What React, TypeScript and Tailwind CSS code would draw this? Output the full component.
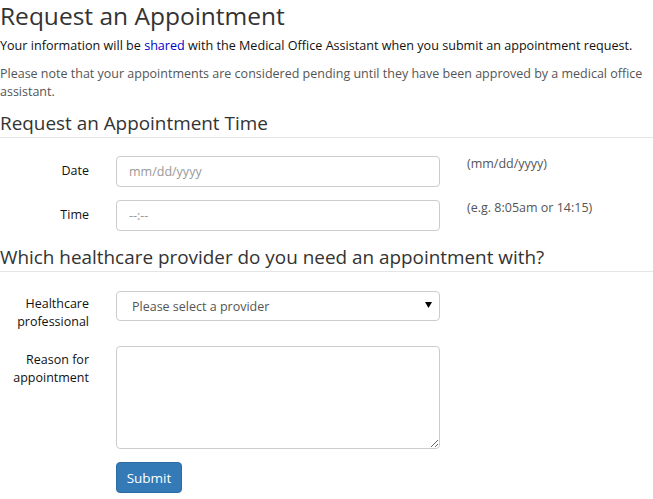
import React from "react";

export default function App() {
  return (
    <div className="bg-white text-[#333] text-[12.5px] leading-[18px]" style={{ fontFamily: '"Open Sans", "Liberation Sans", sans-serif' }}>
      <h1 className="text-[24.5px] leading-[30px] text-[#333] pt-[1px]">Request an Appointment</h1>
      <p className="mt-[6px] text-[#111] text-[12.6px]">
        Your information will be <span className="text-[#0000cc]">shared</span> with the Medical Office Assistant when you submit an appointment request.
      </p>
      <p className="mt-[10px] text-[#555] pr-[4px]">
        Please note that your appointments are considered pending until they have been approved by a medical office assistant.
      </p>
      <h3 className="mt-[10px] text-[18.9px] leading-[24px] text-[#333] border-b border-[#e5e5e5] pb-[2px]">Request an Appointment Time</h3>

      <div className="mt-[18px] flex items-start">
        <label className="w-[89px] text-right text-[#111] pt-[6px]">Date</label>
        <input className="ml-[27px] w-[324px] h-[31px] border border-[#ccc] rounded-[4px] px-[12px] text-[12.5px] placeholder-[#999]" placeholder="mm/dd/yyyy" />
        <span className="ml-[27px] text-[#555] -mt-[1px]">(mm/dd/yyyy)</span>
      </div>
      <div className="mt-[13px] flex items-start">
        <label className="w-[89px] text-right text-[#111] pt-[6px]">Time</label>
        <input className="ml-[27px] w-[324px] h-[31px] border border-[#ccc] rounded-[4px] px-[12px] text-[12.5px] placeholder-[#999]" placeholder="--:--" />
        <span className="ml-[27px] text-[#555] -mt-[1px]">(e.g. 8:05am or 14:15)</span>
      </div>

      <h3 className="mt-[14px] text-[18.9px] leading-[24px] text-[#333] border-b border-[#e5e5e5] pb-[2px]">Which healthcare provider do you need an appointment with?</h3>

      <div className="mt-[19px] flex items-start">
        <label className="w-[89px] text-right text-[#111] pt-[4px]">Healthcare professional</label>
        <div className="ml-[27px] w-[324px] h-[30px] border border-[#ccc] rounded-[4px] pl-[15px] pr-[7px] flex items-center justify-between text-[#555]">
          <span className="mt-[1px]">Please select a provider</span>
          <svg width="7" height="6" viewBox="0 0 7 6" className="-mt-[2px]">
            <polygon points="0,0 7,0 3.5,6" fill="#000" />
          </svg>
        </div>
      </div>
      <div className="mt-[15px] flex items-start">
        <label className="w-[89px] text-right text-[#111] pt-[5px]">Reason for appointment</label>
        <textarea className="ml-[27px] w-[324px] h-[103px] border border-[#ccc] rounded-[4px] px-[12px] py-[6px] text-[12.5px] block" />
      </div>
      <div className="mt-[13px] flex">
        <button className="ml-[116px] w-[66px] h-[31px] bg-[#337ab7] border border-[#2e6da4] rounded-[4px] text-white text-[13.5px]">Submit</button>
      </div>
    </div>
  );
}
